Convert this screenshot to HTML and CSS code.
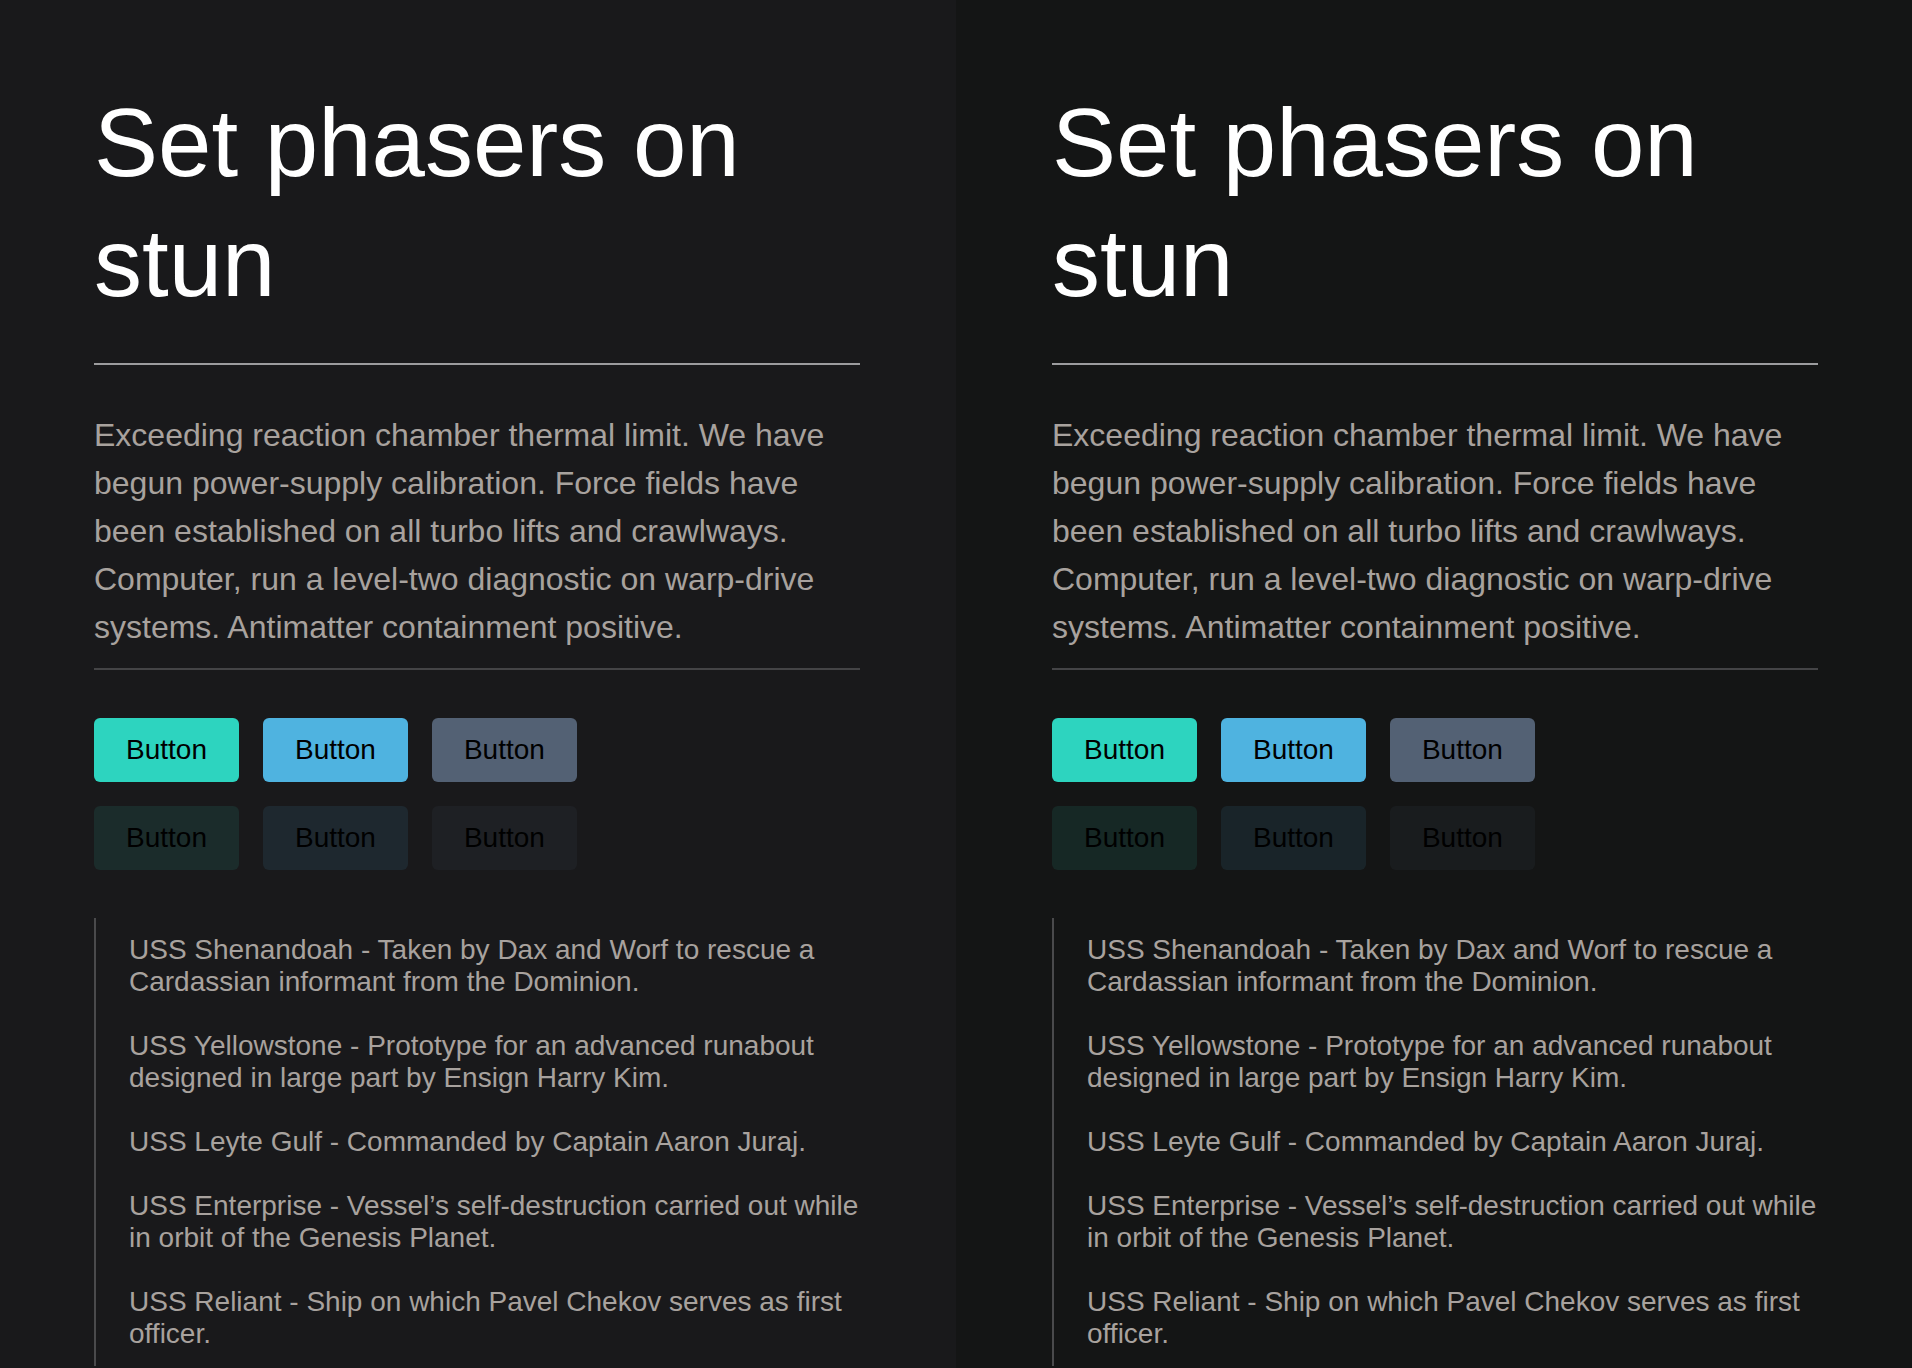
FILE: index.html
```html
<!DOCTYPE html>
<html lang="en">
<head>
    <meta charset="UTF-8">
    <meta name="viewport" content="width=device-width, initial-scale=1.0">
    <title>Set phasers on stun</title>
    <link rel="stylesheet" href="styles.css">
</head>
<body>
    <div class="page">
        <section class="column column-zinc">
            <h1 class="title">Set phasers on stun</h1>
            <hr class="rule rule-light">
            <p class="lead">Exceeding reaction chamber thermal limit. We have begun power-supply calibration. Force fields have been established on all turbo lifts and crawlways. Computer, run a level-two diagnostic on warp-drive systems. Antimatter containment positive.</p>
            <hr class="rule rule-dark">
            <div class="buttons">
                <div class="button-row">
                    <button class="btn btn-teal">Button</button>
                    <button class="btn btn-sky">Button</button>
                    <button class="btn btn-slate">Button</button>
                </div>
                <div class="button-row">
                    <button class="btn btn-teal-soft">Button</button>
                    <button class="btn btn-sky-soft">Button</button>
                    <button class="btn btn-slate-soft">Button</button>
                </div>
            </div>
            <ul class="ships">
                <li>USS Shenandoah - Taken by Dax and Worf to rescue a Cardassian informant from the Dominion.</li>
                <li>USS Yellowstone - Prototype for an advanced runabout designed in large part by Ensign Harry Kim.</li>
                <li>USS Leyte Gulf - Commanded by Captain Aaron Juraj.</li>
                <li>USS Enterprise - Vessel’s self-destruction carried out while in orbit of the Genesis Planet.</li>
                <li>USS Reliant - Ship on which Pavel Chekov serves as first officer.</li>
            </ul>
        </section>

        <section class="column column-neutral">
            <h1 class="title">Set phasers on stun</h1>
            <hr class="rule rule-light">
            <p class="lead">Exceeding reaction chamber thermal limit. We have begun power-supply calibration. Force fields have been established on all turbo lifts and crawlways. Computer, run a level-two diagnostic on warp-drive systems. Antimatter containment positive.</p>
            <hr class="rule rule-dark">
            <div class="buttons">
                <div class="button-row">
                    <button class="btn btn-teal">Button</button>
                    <button class="btn btn-sky">Button</button>
                    <button class="btn btn-slate">Button</button>
                </div>
                <div class="button-row">
                    <button class="btn btn-teal-soft">Button</button>
                    <button class="btn btn-sky-soft">Button</button>
                    <button class="btn btn-slate-soft">Button</button>
                </div>
            </div>
            <ul class="ships">
                <li>USS Shenandoah - Taken by Dax and Worf to rescue a Cardassian informant from the Dominion.</li>
                <li>USS Yellowstone - Prototype for an advanced runabout designed in large part by Ensign Harry Kim.</li>
                <li>USS Leyte Gulf - Commanded by Captain Aaron Juraj.</li>
                <li>USS Enterprise - Vessel’s self-destruction carried out while in orbit of the Genesis Planet.</li>
                <li>USS Reliant - Ship on which Pavel Chekov serves as first officer.</li>
            </ul>
        </section>
    </div>
</body>
</html>
```

FILE: styles.css
```css
* {
    box-sizing: border-box;
}
body {
    margin: 0;
    font-family: "Liberation Sans", Arial, Helvetica, sans-serif;
    background: #19191b;
}
.page {
    display: grid;
    grid-template-columns: 1fr 1fr;
    height: 100vh;
    overflow: hidden;
}
.column-zinc {
    padding: 83px 96px 0 94px;
    background: #19191b;
}
.column-neutral {
    padding: 83px 94px 0 96px;
    background: #141515;
}
.title {
    margin: 0 0 40px;
    font-size: 96px;
    line-height: 1.25;
    font-weight: 400;
    color: #fff;
}
.rule {
    margin: 0;
    border: none;
}
.rule-light {
    height: 2px;
    background: #9c9c9e;
}
.rule-dark {
    height: 2px;
    background: #444446;
}
.lead {
    margin: 46px 0 17px;
    font-size: 32px;
    line-height: 48px;
    color: #a8a29e;
}
.buttons {
    display: flex;
    flex-direction: column;
    gap: 24px;
    margin-top: 48px;
}
.button-row {
    display: flex;
    gap: 24px;
}
.btn {
    font-family: inherit;
    font-size: 28px;
    line-height: 32px;
    padding: 16px 32px;
    border: none;
    border-radius: 6px;
    color: #000;
    cursor: pointer;
}
.btn-teal {
    background: #2dd4bf;
}
.btn-sky {
    background: #4fb3e0;
}
.btn-slate {
    background: #536174;
}
.btn-teal-soft {
    background: rgba(45, 212, 191, 0.1);
}
.btn-sky-soft {
    background: rgba(79, 179, 224, 0.1);
}
.btn-slate-soft {
    background: rgba(83, 97, 116, 0.1);
}
.ships {
    list-style: none;
    margin: 48px -12px 0 0;
    padding: 16px 0 16px 33px;
    border-left: 2px solid #4a4a4c;
}
.ships li {
    font-size: 28px;
    line-height: 32px;
    color: #a8a29e;
    margin-bottom: 32px;
}
.ships li:last-child {
    margin-bottom: 0;
}
```
